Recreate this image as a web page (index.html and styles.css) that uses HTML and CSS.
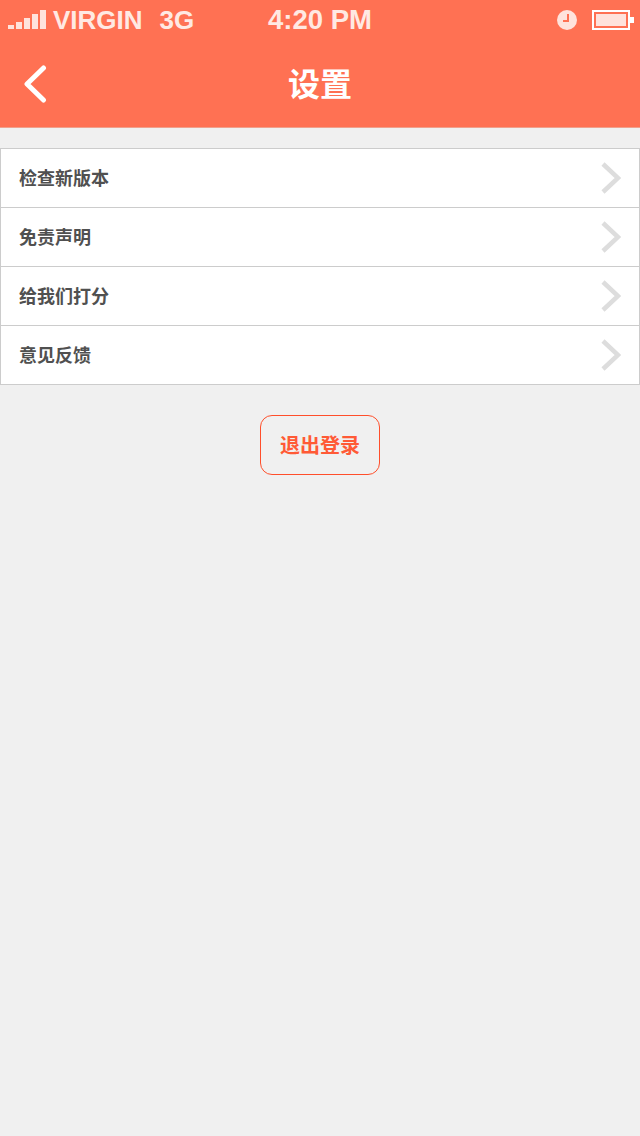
FILE: index.html
```html
<!DOCTYPE html>
<html lang="zh-CN">
<head>
    <meta charset="UTF-8">
    <title>设置</title>
    <link rel="stylesheet" href="styles.css">
</head>
<body>
    <header class="top">
        <div class="status">
            <div class="status-left">
                <svg class="signal" width="38" height="20" viewBox="0 0 38 20">
                    <rect x="0" y="15" width="6" height="4"/>
                    <rect x="8" y="12" width="6" height="7"/>
                    <rect x="16" y="8" width="6" height="11"/>
                    <rect x="24" y="4" width="6" height="15"/>
                    <rect x="32" y="0" width="6" height="19"/>
                </svg>
                <span class="carrier">VIRGIN</span>
                <span class="network">3G</span>
            </div>
            <span class="clock">4:20 PM</span>
            <div class="status-right">
                <svg class="alarm" width="20" height="20" viewBox="0 0 20 20">
                    <circle cx="10" cy="10" r="10" fill="#ffe3dc"/>
                    <path d="M11 4v7H6" fill="none" stroke="#ff7153" stroke-width="2"/>
                </svg>
                <svg class="battery" width="42" height="20" viewBox="0 0 42 20">
                    <rect x="1" y="1" width="36" height="18" fill="none" stroke="#fff" stroke-width="2"/>
                    <rect x="4" y="4" width="30" height="12" fill="#ffe3dc"/>
                    <rect x="38" y="7" width="4" height="6" fill="#fff"/>
                </svg>
            </div>
        </div>
        <div class="navbar">
            <svg class="back" width="24" height="38" viewBox="0 0 24 38">
                <path d="M20.500 3 4 19l16.500 16" fill="none" stroke="#fff" stroke-width="5" stroke-linecap="round" stroke-linejoin="round"/>
            </svg>
            <h1>设置</h1>
        </div>
    </header>

    <ul class="menu">
        <li>检查新版本<svg class="arrow" width="20" height="32" viewBox="0 0 20 32"><path d="M2 2l15 14L2 30" fill="none" stroke="#ddd" stroke-width="4.500"/></svg></li>
        <li>免责声明<svg class="arrow" width="20" height="32" viewBox="0 0 20 32"><path d="M2 2l15 14L2 30" fill="none" stroke="#ddd" stroke-width="4.500"/></svg></li>
        <li>给我们打分<svg class="arrow" width="20" height="32" viewBox="0 0 20 32"><path d="M2 2l15 14L2 30" fill="none" stroke="#ddd" stroke-width="4.500"/></svg></li>
        <li>意见反馈<svg class="arrow" width="20" height="32" viewBox="0 0 20 32"><path d="M2 2l15 14L2 30" fill="none" stroke="#ddd" stroke-width="4.500"/></svg></li>
    </ul>

    <div class="logout-wrap">
        <button class="logout">退出登录</button>
    </div>
</body>
</html>
```

FILE: styles.css
```css
html, body {
    height: 100%;
}
body {
    margin: 0;
    background-color: #f0f0f0;
    font-family: "Liberation Sans", "Noto Sans CJK SC", sans-serif;
    overflow: hidden;
}
.top {
    height: 127px;
    background-color: #ff7153;
    border-bottom: 1px solid #f0a08c;
}
.status {
    height: 40px;
    display: grid;
    grid-template-columns: 1fr auto 1fr;
    align-items: center;
    color: #ffe9e3;
    font-size: 26px;
    font-weight: bold;
}
.status-left {
    display: flex;
    align-items: center;
    padding-left: 8px;
}
.signal {
    fill: #ffe3dc;
    margin-right: 7px;
}
.network {
    margin-left: 17px;
}
.clock {
    font-size: 27.500px;
}
.status-right {
    display: flex;
    align-items: center;
    justify-content: flex-end;
    gap: 15px;
    padding-right: 6px;
}
.navbar {
    height: 87px;
    display: flex;
    align-items: center;
    justify-content: center;
    position: relative;
}
.back {
    position: absolute;
    left: 23px;
    top: 25px;
}
h1 {
    margin: 0 0 3px;
    color: #fff;
    font-size: 32px;
    font-weight: bold;
}
.menu {
    list-style: none;
    margin: 20px 0 0;
    padding: 0;
    background-color: #fff;
    border: 1px solid #ccc;
}
.menu li {
    height: 56px;
    display: flex;
    align-items: center;
    justify-content: space-between;
    padding: 0 18px 2px;
    color: #505050;
    font-size: 18px;
    font-weight: bold;
    border-bottom: 1px solid #ccc;
}
.menu li:last-child {
    border-bottom: none;
}
.arrow {
    margin-top: 2px;
}
.logout-wrap {
    display: flex;
    justify-content: center;
    margin-top: 30px;
}
.logout {
    width: 120px;
    height: 60px;
    padding: 0 0 2px;
    background: none;
    border: 1px solid #ff4f2b;
    border-radius: 12px;
    color: #ff5a36;
    font-family: inherit;
    font-size: 20px;
    font-weight: bold;
}
```
